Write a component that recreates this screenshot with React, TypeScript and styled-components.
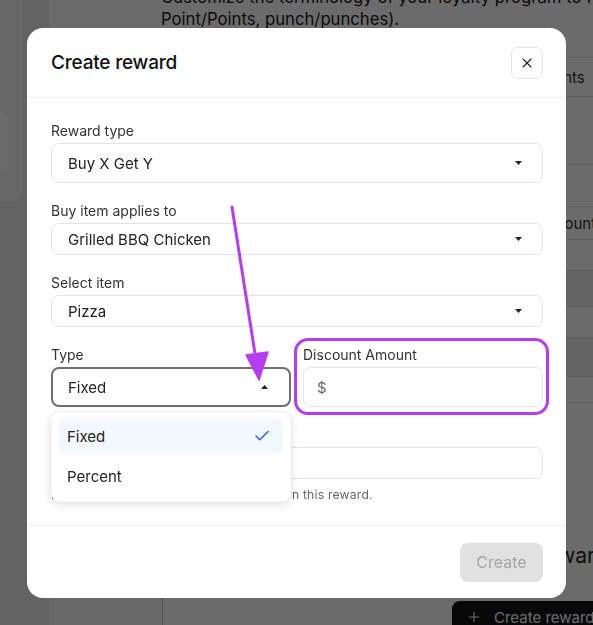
import React from 'react';
import styled, { createGlobalStyle } from 'styled-components';
import { Check, Plus, X } from 'lucide-react';

const GlobalStyle = createGlobalStyle`
  html, body {
    margin: 0;
    padding: 0;
    height: 100%;
    overflow: hidden;
    background: #ffffff;
  }
  body {
    font-family: Inter, "Noto Sans", "Liberation Sans", sans-serif;
    color: #222;
  }
  * {
    box-sizing: border-box;
  }
`;

/* ---------- page behind the dialog ---------- */

const Page = styled.div`
  display: flex;
  height: 625px;
  overflow: hidden;
`;

const Rail = styled.aside`
  width: 49px;
  flex-shrink: 0;
  background: #ededed;
`;

const RailCard = styled.div`
  width: 24px;
  height: 203px;
  background: #f6f6f6;
  border: 1px solid #e2e2e2;
  border-left: none;
  border-top: none;
  border-radius: 0 0 12px 0;
  padding-top: 112px;
`;

const RailItem = styled.div`
  width: 8px;
  height: 58px;
  background: #ffffff;
  border-radius: 0 8px 8px 0;
`;

const Content = styled.main`
  flex: 1;
  display: flex;
  flex-direction: column;
  min-width: 0;
`;

const Intro = styled.p`
  margin: -14px 0 0;
  padding-left: 112px;
  font-size: 16.7px;
  line-height: 22px;
  color: #222;
  white-space: nowrap;
`;

const Lower = styled.div`
  flex: 1;
  display: flex;
  margin-top: 5px;
`;

const SubNav = styled.div`
  width: 114px;
  flex-shrink: 0;
  background: #fafafa;
  border-right: 1px solid #cfcfcf;
`;

const TableArea = styled.div`
  flex: 1;
  display: flex;
  flex-direction: column;
  padding-top: 22px;
`;

const Table = styled.div`
  border-top: 1px solid #dedede;
  display: flex;
  flex-direction: column;
`;

const TableRow = styled.div<{ $h: number; $shade?: boolean }>`
  height: ${({ $h }) => $h}px;
  display: grid;
  grid-template-columns: 378px 1fr;
  align-items: center;
  border-bottom: 1px solid #dedede;
  background: ${({ $shade }) => ($shade ? '#f1f1f1' : 'transparent')};
  font-size: 15px;
  color: #333;
  white-space: nowrap;
`;

const Heading = styled.div`
  margin-top: 139px;
  display: grid;
  grid-template-columns: 370px 1fr;
  font-size: 21px;
  line-height: 28px;
  color: #222;
  white-space: nowrap;
`;

const DarkButton = styled.div`
  margin: 31px 0 0 289px;
  width: 160px;
  height: 32px;
  flex-shrink: 0;
  background: #141414;
  color: #fff;
  border-radius: 8px 8px 0 0;
  display: flex;
  align-items: center;
  gap: 12px;
  padding-left: 14px;
  font-size: 15px;
  white-space: nowrap;
`;

const Overlay = styled.div`
  position: fixed;
  inset: 0;
  background: rgba(0, 0, 0, 0.58);
`;

/* ---------- dialog ---------- */

const Dialog = styled.div`
  position: fixed;
  left: 27px;
  top: 28px;
  width: 539px;
  height: 570px;
  background: #fff;
  border-radius: 16px;
  display: flex;
  flex-direction: column;
`;

const DialogHeader = styled.header`
  height: 70px;
  flex-shrink: 0;
  display: flex;
  align-items: center;
  justify-content: space-between;
  padding: 0 23px 0 24px;
  border-bottom: 1px solid #efefef;
`;

const Title = styled.h2`
  margin: 0;
  font-size: 19px;
  font-weight: 500;
  color: #111;
  letter-spacing: -0.2px;
`;

const CloseButton = styled.button`
  width: 32px;
  height: 32px;
  border: 1px solid #e4e4e4;
  border-radius: 7px;
  background: #fff;
  display: flex;
  align-items: center;
  justify-content: center;
  color: #222;
  padding: 0;
`;

const DialogBody = styled.div`
  flex: 1;
  padding: 23px 23px 0 24px;
  display: flex;
  flex-direction: column;
  gap: 18px;
`;

const Field = styled.div`
  display: flex;
  flex-direction: column;
  gap: 2px;
  position: relative;
  min-width: 0;
`;

const Label = styled.label`
  font-size: 14px;
  line-height: 20px;
  color: #333;
`;

const Row = styled.div`
  display: grid;
  grid-template-columns: 1fr 1fr;
  gap: 12px;
`;

const SelectBox = styled.div<{ $h: number; $focused?: boolean }>`
  height: ${({ $h }) => $h}px;
  border: ${({ $focused }) => ($focused ? '2px solid #6f6f6f' : '1px solid #e3e3e3')};
  border-radius: 8px;
  display: flex;
  align-items: center;
  justify-content: space-between;
  padding: ${({ $focused }) => ($focused ? '0 21px 0 15px' : '0 20px 0 16px')};
  font-size: 15px;
  color: #222;
  background: #fff;
`;

const Caret = styled.svg<{ $up?: boolean }>`
  width: 7px;
  height: 4px;
  transform: ${({ $up }) => ($up ? 'rotate(180deg)' : 'none')};
`;

const Input = styled.div<{ $h: number }>`
  height: ${({ $h }) => $h}px;
  border: 1px solid #e3e3e3;
  border-radius: 8px;
  display: flex;
  align-items: center;
  padding-left: 13px;
  font-size: 15px;
  color: #666;
`;

const Helper = styled.p`
  margin: 6px 0 0;
  font-size: 12.2px;
  letter-spacing: 0.2px;
  color: #666;
  white-space: nowrap;
`;

const DialogFooter = styled.footer`
  height: 73px;
  flex-shrink: 0;
  border-top: 1px solid #efefef;
  display: flex;
  align-items: center;
  justify-content: flex-end;
  padding: 0 23px 0 24px;
`;

const PrimaryButton = styled.button<{ $disabled?: boolean }>`
  width: 83px;
  height: 39px;
  border: none;
  border-radius: 8px;
  background: ${({ $disabled }) => ($disabled ? '#e1e1e1' : '#111')};
  color: ${({ $disabled }) => ($disabled ? '#a6a6a6' : '#fff')};
  font-family: inherit;
  font-size: 16px;
`;

/* ---------- open listbox ---------- */

const Listbox = styled.ul`
  position: absolute;
  left: 0;
  right: 0;
  top: 67px;
  margin: 0;
  padding: 6px 8px 8px;
  list-style: none;
  background: #fff;
  border-radius: 9px;
  box-shadow: 0 2px 10px rgba(0, 0, 0, 0.13), 0 0 0 1px rgba(0, 0, 0, 0.03);
  display: flex;
  flex-direction: column;
  gap: 4px;
  z-index: 2;
`;

const Option = styled.li<{ $active?: boolean }>`
  height: 36px;
  border-radius: 8px;
  display: flex;
  align-items: center;
  justify-content: space-between;
  padding: 0 12px 0 8px;
  font-size: 15px;
  color: #222;
  background: ${({ $active }) => ($active ? '#f3f7fe' : 'transparent')};
`;

/* ---------- annotations ---------- */

const Highlight = styled.div`
  position: fixed;
  left: 294px;
  top: 338px;
  width: 255px;
  height: 77px;
  border: 3px solid #b63cf1;
  border-radius: 14px;
  pointer-events: none;
`;

const ArrowLayer = styled.svg`
  position: fixed;
  left: 0;
  top: 0;
  width: 593px;
  height: 625px;
  pointer-events: none;
`;

const CaretIcon = ({ up }: { up?: boolean }) => (
  <Caret viewBox="0 0 7 4" $up={up}>
    <path d="M0 0h7L3.5 4z" fill="#222" />
  </Caret>
);

const App = () => {
  return (
    <>
      <GlobalStyle />
      <Page>
        <Rail>
          <RailCard>
            <RailItem />
          </RailCard>
        </Rail>
        <Content>
          <Intro>
            Customize the terminology of your loyalty program to fit your brand (e.g., Star/Stars,
            <br />
            Point/Points, punch/punches).
          </Intro>
          <Lower>
            <SubNav />
            <TableArea>
              <Table>
                <TableRow $h={39}>
                  <span>Stars</span>
                  <span>Points</span>
                </TableRow>
                <TableRow $h={68}>
                  <span />
                  <span />
                </TableRow>
                <TableRow $h={42}>
                  <span />
                  <span />
                </TableRow>
                <TableRow $h={33}>
                  <span>Reward</span>
                  <span>Amount</span>
                </TableRow>
                <TableRow $h={31}>
                  <span />
                  <span />
                </TableRow>
                <TableRow $h={36} $shade>
                  <span />
                  <span />
                </TableRow>
                <TableRow $h={31}>
                  <span />
                  <span />
                </TableRow>
                <TableRow $h={39} $shade>
                  <span />
                  <span />
                </TableRow>
                <TableRow $h={26}>
                  <span />
                  <span />
                </TableRow>
              </Table>
              <Heading>
                <span>Loyalty</span>
                <span>Rewards</span>
              </Heading>
              <DarkButton>
                <Plus size={16} strokeWidth={1.6} />
                Create reward
              </DarkButton>
            </TableArea>
          </Lower>
        </Content>
      </Page>
      <Overlay />
      <Dialog>
        <DialogHeader>
          <Title>Create reward</Title>
          <CloseButton>
            <X size={16} strokeWidth={1.6} />
          </CloseButton>
        </DialogHeader>
        <DialogBody>
          <Field>
            <Label>Reward type</Label>
            <SelectBox $h={40}>
              Buy X Get Y
              <CaretIcon />
            </SelectBox>
          </Field>
          <Field>
            <Label>Buy item applies to</Label>
            <SelectBox $h={32}>
              Grilled BBQ Chicken
              <CaretIcon />
            </SelectBox>
          </Field>
          <Field>
            <Label>Select item</Label>
            <SelectBox $h={32}>
              Pizza
              <CaretIcon />
            </SelectBox>
          </Field>
          <Row>
            <Field>
              <Label>Type</Label>
              <SelectBox $h={40} $focused>
                Fixed
                <CaretIcon up />
              </SelectBox>
              <Listbox>
                <Option $active>
                  Fixed
                  <Check size={18} strokeWidth={2} color="#2563eb" />
                </Option>
                <Option>Percent</Option>
              </Listbox>
            </Field>
            <Field>
              <Label>Discount Amount</Label>
              <Input $h={40}>$</Input>
            </Field>
          </Row>
          <Field>
            <Label>Points required</Label>
            <Input $h={32} />
            <Helper>Number of points customers need to earn this reward.</Helper>
          </Field>
        </DialogBody>
        <DialogFooter>
          <PrimaryButton $disabled>Create</PrimaryButton>
        </DialogFooter>
      </Dialog>
      <Highlight />
      <ArrowLayer viewBox="0 0 593 625">
        <line x1="232" y1="207" x2="256" y2="360" stroke="#b63cf1" strokeWidth="3" strokeLinecap="round" />
        <path d="M246 355 L268 352 L259 380 Z" fill="#b63cf1" stroke="#b63cf1" strokeWidth="1.5" strokeLinejoin="round" />
      </ArrowLayer>
    </>
  );
};

export default App;
